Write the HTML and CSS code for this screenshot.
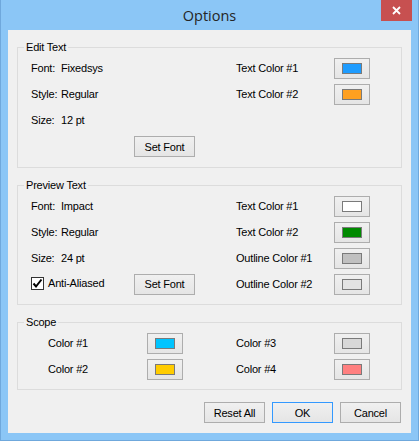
FILE: index.html
```html
<!DOCTYPE html>
<html>
<head>
<meta charset="utf-8">
<link rel="stylesheet" href="styles.css">
</head>
<body>
<div class="window">
  <div class="titlebar">
    <span class="title">Options</span>
    <button class="close" aria-label="Close">
      <svg width="9" height="9" viewBox="0 0 9 9"><path d="M1 1 L8 8 M8 1 L1 8" stroke="#fff" stroke-width="1.8" fill="none"/></svg>
    </button>
  </div>
  <div class="client">
    <div class="group">
      <div class="group-title">Edit Text</div>
      <div class="grid">
        <span class="lbl">Font:</span><span class="val">Fixedsys</span>
        <span class="rlbl">Text Color #1</span><span class="cbtn"><i class="sw" style="background:#1e9cff"></i></span>

        <span class="lbl">Style:</span><span class="val">Regular</span>
        <span class="rlbl">Text Color #2</span><span class="cbtn"><i class="sw" style="background:#ffa020"></i></span>

        <span class="lbl">Size:</span><span class="val">12 pt</span>
        <span class="gap2"></span>

        <span class="btn setfont">Set Font</span>
      </div>
    </div>

    <div class="group">
      <div class="group-title">Preview Text</div>
      <div class="grid grid-pv">
        <span class="lbl">Font:</span><span class="val">Impact</span>
        <span class="rlbl">Text Color #1</span><span class="cbtn"><i class="sw" style="background:#ffffff"></i></span>

        <span class="lbl">Style:</span><span class="val">Regular</span>
        <span class="rlbl">Text Color #2</span><span class="cbtn"><i class="sw" style="background:#008a00"></i></span>

        <span class="lbl">Size:</span><span class="val">24 pt</span>
        <span class="rlbl">Outline Color #1</span><span class="cbtn"><i class="sw" style="background:#c0c0c0"></i></span>

        <label class="check">
          <span class="box"><svg width="11" height="11" viewBox="0 0 11 11"><path d="M1.5 5.5 L4 8.5 L9.5 1.5" stroke="#000" stroke-width="2" fill="none"/></svg></span>
          <span>Anti-Aliased</span>
        </label>
        <span class="btn setfont-pv">Set Font</span>
        <span class="rlbl">Outline Color #2</span><span class="cbtn"><i class="sw" style="background:#e3e3e3"></i></span>
      </div>
    </div>

    <div class="group">
      <div class="group-title">Scope</div>
      <div class="grid grid-scope">
        <span class="slbl">Color #1</span><span class="cbtn"><i class="sw" style="background:#00c4ff"></i></span>
        <span></span>
        <span class="rlbl">Color #3</span><span class="cbtn"><i class="sw" style="background:#d8d8d8"></i></span>

        <span class="slbl">Color #2</span><span class="cbtn"><i class="sw" style="background:#ffcc00"></i></span>
        <span></span>
        <span class="rlbl">Color #4</span><span class="cbtn"><i class="sw" style="background:#ff8080"></i></span>
      </div>
    </div>

    <div class="actions">
      <span class="btn">Reset All</span>
      <span class="btn default">OK</span>
      <span class="btn">Cancel</span>
    </div>
  </div>
</div>
</body>
</html>
```

FILE: styles.css
```css
html, body {
  margin: 0;
  padding: 0;
}

body {
  width: 419px;
  height: 441px;
  overflow: hidden;
  font-family: "Liberation Sans", Arial, sans-serif;
  font-size: 11px;
  letter-spacing: -0.2px;
  color: #000;
}

.window {
  position: relative;
  box-sizing: border-box;
  width: 419px;
  height: 441px;
  background: #8bc6f6;
  border: 1px solid #6fa8dc;
  border-top: none;
  padding: 0 7px 7px 7px;
  display: flex;
  flex-direction: column;
}

.titlebar {
  flex: 0 0 30px;
  height: 30px;
  display: flex;
  align-items: center;
  justify-content: center;
}

.title {
  font-family: "Open Sans", "Noto Sans", sans-serif;
  font-size: 14.5px;
  letter-spacing: 0;
  color: #252525;
  margin-top: 1px;
}

.close {
  position: absolute;
  top: 0;
  right: 6px;
  width: 31px;
  height: 21px;
  border: none;
  padding: 0;
  margin: 0;
  background: #c75050;
  display: flex;
  align-items: center;
  justify-content: center;
}

.client {
  flex: 1;
  background: #f0f0f0;
  display: flex;
  flex-direction: column;
  padding: 17px 0 10px;
}

.group {
  margin: 0 9px 17px;
  border: 1px solid #dcdcdc;
  padding-bottom: 8px;
}

.group + .group {
  padding-bottom: 7px;
}

.group:nth-child(3) {
  margin-bottom: 12px;
}

.group-title {
  width: max-content;
  height: 13px;
  line-height: 13px;
  margin: -7px 0 0 6px;
  padding: 0 2px 0 2px;
  background: #f0f0f0;
}

.grid {
  margin-top: 1px;
  padding-left: 13px;
  display: grid;
  grid-template-columns: 30px 73px 102px 98px 36px;
  grid-auto-rows: 26px;
  align-items: center;
}

.lbl {
  grid-column: 1;
  white-space: nowrap;
}

.val {
  grid-column: 2 / span 2;
  white-space: nowrap;
}

.rlbl {
  grid-column: 4;
  white-space: nowrap;
}

.cbtn {
  grid-column: 5;
  box-sizing: border-box;
  width: 36px;
  height: 21px;
  border: 1px solid #adadad;
  background: linear-gradient(#f0f0f0, #e5e5e5);
  display: flex;
  align-items: center;
  justify-content: center;
}

.sw {
  display: block;
  box-sizing: border-box;
  width: 20px;
  height: 11px;
  border: 1px solid #7a7a7a;
}

.gap2 {
  grid-column: 4 / span 2;
}

.btn {
  box-sizing: border-box;
  width: 61px;
  height: 21px;
  border: 1px solid #adadad;
  background: linear-gradient(#f0f0f0, #e5e5e5);
  display: flex;
  align-items: center;
  justify-content: center;
  white-space: nowrap;
}

.btn.default {
  border-color: #3399ff;
}

.setfont {
  grid-column: 3;
  align-self: end;
  margin-bottom: 2px;
}

.setfont-pv {
  grid-column: 3;
}

.check {
  grid-column: 1 / span 2;
  display: flex;
  align-items: center;
  gap: 4px;
  margin-top: -2px;
}

.box {
  box-sizing: border-box;
  width: 13px;
  height: 13px;
  border: 1px solid #333;
  background: #fff;
  display: flex;
  align-items: center;
  justify-content: center;
}

.grid-scope {
  padding-left: 30px;
  grid-template-columns: 99px 36px 53px 98px 36px;
}

.slbl {
  grid-column: 1;
  white-space: nowrap;
}

.grid-scope .cbtn {
  grid-column: auto;
}

.actions {
  display: flex;
  justify-content: flex-end;
  gap: 7px;
  padding-right: 10px;
}
```
